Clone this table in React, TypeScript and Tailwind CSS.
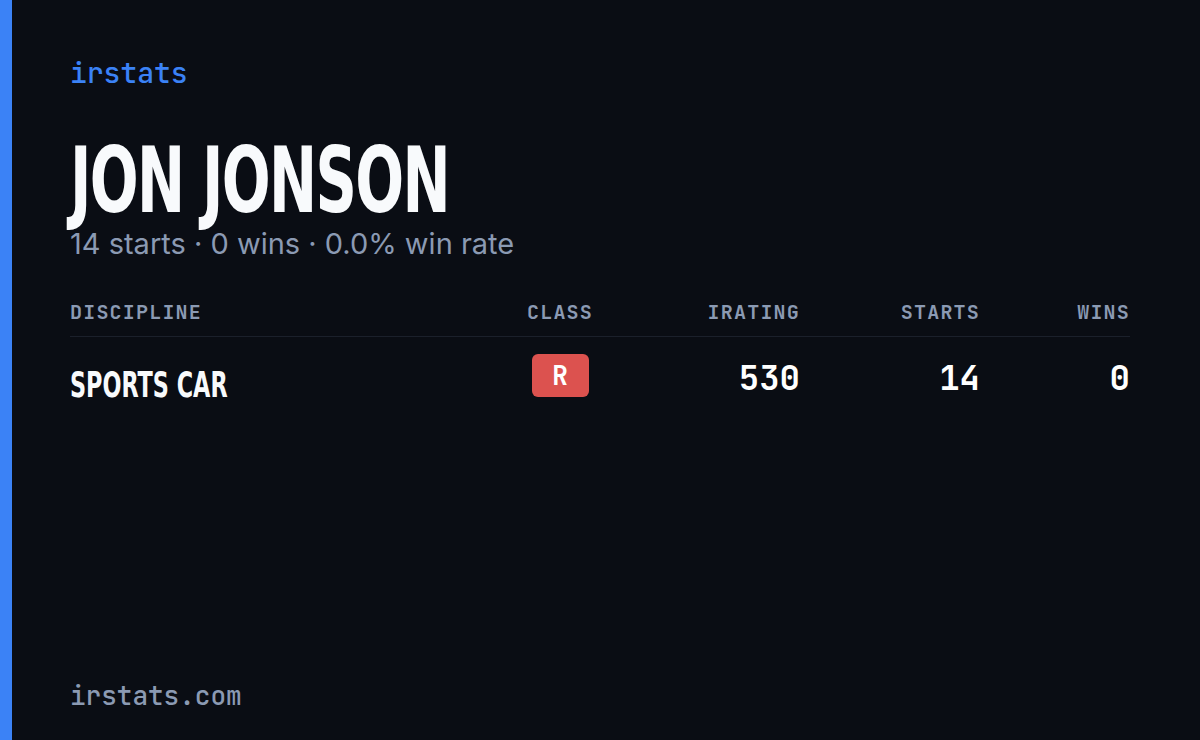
const mono = "font-['JetBrains_Mono','DejaVu_Sans_Mono','Liberation_Mono',monospace]";
const cond = "font-['DejaVu_Sans_Condensed','DejaVu_Sans',sans-serif]";

const rows = [
  { discipline: 'SPORTS CAR', cls: 'R', irating: 530, starts: 14, wins: 0 },
];

export default function App() {
  return (
    <div className="flex h-[740px] w-[1200px] bg-[#0a0d14]">
      {/* accent bar */}
      <div className="w-3 bg-[#3b82f6]" />

      <div className="flex flex-1 flex-col pt-[55px] pr-[70px] pb-[26px] pl-[58px]">
        <div className={`${mono} text-[28px] leading-9 font-medium text-[#3b82f6]`}>irstats</div>

        <h1 className={`${cond} mt-[45px] origin-left scale-x-[0.71] text-[90px] leading-[90px] font-bold tracking-tight whitespace-nowrap text-[#f8fafc]`}>
          JON JONSON
        </h1>
        <p className="font-['Inter','Open_Sans',sans-serif] text-[29px] leading-9 text-[#8b9ab3]">
          14 starts · 0 wins · 0.0% win rate
        </p>

        <div className="mt-[36px]">
          <div className={`${mono} grid grid-cols-[1fr_120px_180px_180px_150px] border-b border-[#1b202b] pb-[10px] text-[20px] leading-7 font-semibold tracking-[0.06em] text-[#8b9ab3]`}>
            <div>DISCIPLINE</div>
            <div className="text-center">CLASS</div>
            <div className="text-right">IRATING</div>
            <div className="text-right">STARTS</div>
            <div className="text-right">WINS</div>
          </div>

          {rows.map((r) => (
            <div key={r.discipline} className="grid grid-cols-[1fr_120px_180px_180px_150px] items-start pt-4">
              <div className={`${cond} mt-[12px] origin-left scale-x-[0.71] text-[35px] leading-[40px] font-bold whitespace-nowrap text-[#f8fafc]`}>
                {r.discipline}
              </div>
              <div className="mt-px flex justify-center">
                <span className={`${mono} flex h-[43px] w-[57px] items-center justify-center rounded-md bg-[#dc524f] text-[26px] font-bold text-white`}>
                  {r.cls}
                </span>
              </div>
              <div className={`${mono} mt-[5px] text-right text-[34px] leading-[40px] font-semibold text-white`}>{r.irating}</div>
              <div className={`${mono} mt-[5px] text-right text-[34px] leading-[40px] font-semibold text-white`}>{r.starts}</div>
              <div className={`${mono} mt-[5px] text-right text-[34px] leading-[40px] font-semibold text-white`}>{r.wins}</div>
            </div>
          ))}
        </div>

        <div className={`${mono} mt-auto text-[26px] leading-9 font-medium text-[#8b9ab3]`}>irstats.com</div>
      </div>
    </div>
  );
}
